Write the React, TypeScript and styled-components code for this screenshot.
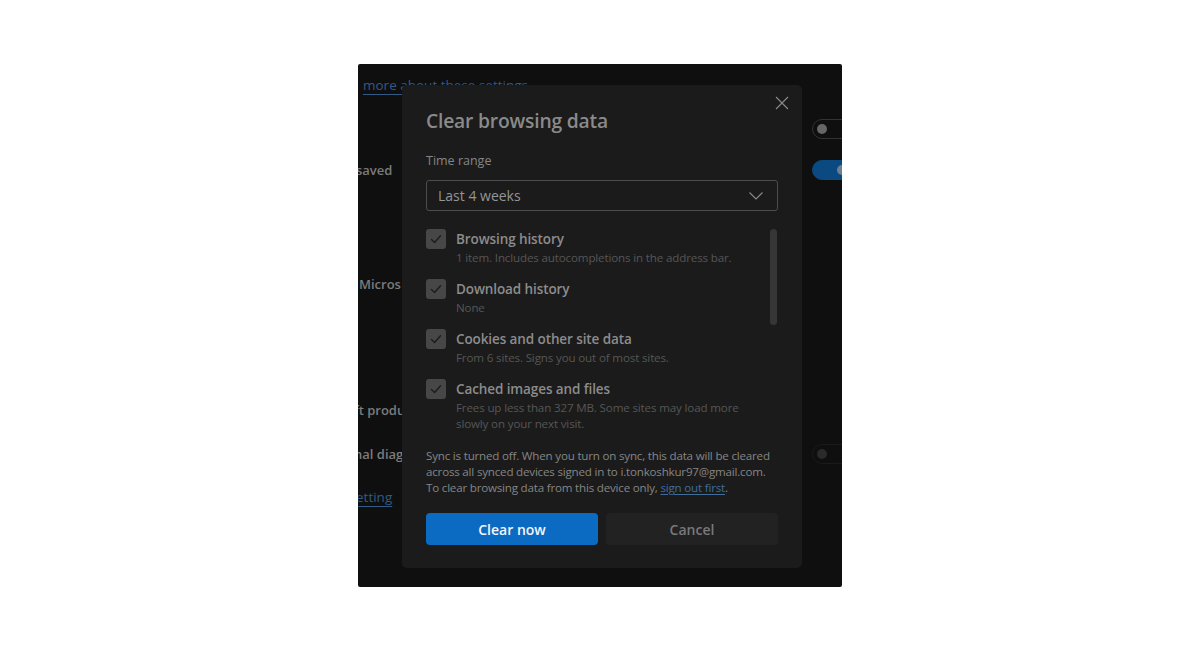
import React from "react";
import styled, { createGlobalStyle } from "styled-components";

const Global = createGlobalStyle`
  html, body { margin: 0; padding: 0; background: #ffffff; }
  body { font-family: "Open Sans", "Noto Sans", sans-serif; }
  * { box-sizing: border-box; }
`;

const Page = styled.div`
  width: 1200px;
  height: 650px;
  display: flex;
  align-items: flex-start;
  justify-content: center;
  padding-top: 64px;
`;

const Shot = styled.div`
  position: relative;
  width: 484px;
  height: 523px;
  background: #0f0f0f;
  overflow: hidden;
  border-radius: 2px;
`;

const BgColumn = styled.div`
  display: flex;
  flex-direction: column;
  width: 484px;
  height: 100%;
  color: #7b7b7b;
  font-size: 13px;
  font-weight: 600;
`;

const BgRow = styled.div<{ $h: number }>`
  height: ${(p) => p.$h}px;
  display: flex;
  align-items: center;
  justify-content: space-between;
  white-space: nowrap;
`;

const BgText = styled.span<{ $shift?: number }>`
  margin-left: ${(p) => p.$shift ?? 0}px;
`;

const BgLink = styled.span<{ $shift?: number }>`
  margin-left: ${(p) => p.$shift ?? 0}px;
  color: #2f5b86;
  font-weight: 400;
  font-size: 13.5px;
  text-decoration: underline;
  text-underline-offset: 4px;
`;

const Toggle = styled.div<{ $on?: boolean; $dim?: boolean }>`
  width: 40px;
  height: 20px;
  margin-right: -10px;
  border-radius: 10px;
  border: 1px solid ${(p) => (p.$on ? "#0b4a80" : p.$dim ? "#1a1a1a" : "#333")};
  background: ${(p) => (p.$on ? "#0b4a80" : "transparent")};
  display: flex;
  align-items: center;
  padding: 0 4px;
  justify-content: ${(p) => (p.$on ? "flex-end" : "flex-start")};
  &::after {
    content: "";
    width: 10px;
    height: 10px;
    border-radius: 50%;
    background: ${(p) => (p.$on ? "#6f7f8f" : p.$dim ? "#2a2a2a" : "#666")};
  }
`;

const Dialog = styled.div`
  position: absolute;
  left: 44px;
  top: 21px;
  width: 400px;
  height: 483px;
  background: #1b1b1b;
  border-radius: 5px;
  padding: 24px 24px 0 24px;
  display: flex;
  flex-direction: column;
`;

const CloseBtn = styled.div`
  position: absolute;
  top: 10px;
  right: 12px;
  width: 16px;
  height: 16px;
  display: flex;
  align-items: center;
  justify-content: center;
`;

const Title = styled.h2`
  margin: 0;
  font-size: 19.3px;
  line-height: 23px;
  font-weight: 600;
  color: #8a8a8a;
  letter-spacing: -0.2px;
`;

const Label = styled.div`
  margin-top: 21px;
  font-size: 12.5px;
  line-height: 16px;
  color: #858585;
`;

const Select = styled.div`
  margin-top: 11px;
  height: 31px;
  border: 1px solid #4d4d4d;
  border-radius: 3px;
  display: flex;
  align-items: center;
  justify-content: space-between;
  padding: 0 14px 0 11px;
  font-size: 14px;
  color: #959595;
`;

const ListWrap = styled.div`
  margin-top: 18px;
  height: 205px;
  display: flex;
  gap: 10px;
  overflow: hidden;
`;

const List = styled.div`
  flex: 1;
  display: flex;
  flex-direction: column;
`;

const Item = styled.div`
  display: flex;
  gap: 10px;
  padding-bottom: 14px;
`;

const Box = styled.div`
  width: 20px;
  height: 20px;
  flex: none;
  border-radius: 3px;
  background: #474747;
  display: flex;
  align-items: center;
  justify-content: center;
`;

const ItemText = styled.div`
  display: flex;
  flex-direction: column;
`;

const ItemTitle = styled.div`
  font-size: 13.5px;
  line-height: 20px;
  font-weight: 600;
  color: #8c8c8c;
  letter-spacing: -0.1px;
`;

const ItemSub = styled.div`
  font-size: 11.6px;
  line-height: 15px;
  color: #565656;
  margin-top: 1px;
  max-width: 300px;
  letter-spacing: -0.15px;
`;

const ScrollTrack = styled.div`
  width: 7px;
  flex: none;
  margin-right: 1px;
`;

const Thumb = styled.div`
  height: 96px;
  border-radius: 4px;
  background: #363636;
`;

const SyncNote = styled.p`
  margin: 14px 0 0 0;
  font-size: 11.6px;
  line-height: 16px;
  color: #858585;
  letter-spacing: -0.2px;
  white-space: nowrap;
`;

const Link = styled.a`
  color: #3e6f9c;
  text-decoration: underline;
  text-underline-offset: 2px;
`;

const Actions = styled.div`
  margin-top: 17px;
  display: flex;
  gap: 8px;
`;

const Button = styled.button<{ $primary?: boolean }>`
  flex: 1;
  height: 32px;
  border: none;
  border-radius: 4px;
  font-family: inherit;
  font-size: 14px;
  font-weight: 600;
  background: ${(p) => (p.$primary ? "#0b6bc2" : "#222222")};
  color: ${(p) => (p.$primary ? "#f2f6fb" : "#797979")};
`;

const Check = () => (
  <svg width="14" height="14" viewBox="0 0 14 14">
    <path d="M2.5 7.5 L5.6 10.5 L11.5 3.8" fill="none" stroke="#1c1c1c" strokeWidth="1.4" strokeLinecap="round" strokeLinejoin="round" />
  </svg>
);

const items = [
  { t: "Browsing history", s: ["1 item. Includes autocompletions in the address bar."] },
  { t: "Download history", s: ["None"] },
  { t: "Cookies and other site data", s: ["From 6 sites. Signs you out of most sites."] },
  { t: "Cached images and files", s: ["Frees up less than 327 MB. Some sites may load more", "slowly on your next visit."] },
];

export default function App() {
  return (
    <>
      <Global />
      <Page>
        <Shot>
          <BgColumn>
            <BgRow $h={42}>
              <BgLink $shift={5}>more about these settings</BgLink>
            </BgRow>
            <BgRow $h={46}>
              <span />
              <Toggle />
            </BgRow>
            <BgRow $h={36}>
              <BgText $shift={-2}>saved</BgText>
              <Toggle $on />
            </BgRow>
            <BgRow $h={76} />
            <BgRow $h={40}>
              <BgText $shift={1}>Micros</BgText>
            </BgRow>
            <BgRow $h={86} />
            <BgRow $h={40}>
              <BgText $shift={-4}>ft produ</BgText>
            </BgRow>
            <BgRow $h={4} />
            <BgRow $h={40}>
              <BgText $shift={-4}>nal diag</BgText>
              <Toggle $dim />
            </BgRow>
            <BgRow $h={46}>
              <BgLink $shift={-2}>etting</BgLink>
            </BgRow>
          </BgColumn>
          <Dialog>
            <CloseBtn>
              <svg width="14" height="14" viewBox="0 0 14 14">
                <path d="M1 1 L13 13 M13 1 L1 13" stroke="#8a8a8a" strokeWidth="1.1" />
              </svg>
            </CloseBtn>
            <Title>Clear browsing data</Title>
            <Label>Time range</Label>
            <Select>
              <span>Last 4 weeks</span>
              <svg width="14" height="8" viewBox="0 0 14 8">
                <path d="M0.5 0.5 L7 7 L13.5 0.5" fill="none" stroke="#8a8a8a" strokeWidth="1.1" />
              </svg>
            </Select>
            <ListWrap>
              <List>
                {items.map((it) => (
                  <Item key={it.t}>
                    <Box>
                      <Check />
                    </Box>
                    <ItemText>
                      <ItemTitle>{it.t}</ItemTitle>
                      {it.s.map((line) => (
                        <ItemSub key={line}>{line}</ItemSub>
                      ))}
                    </ItemText>
                  </Item>
                ))}
              </List>
              <ScrollTrack>
                <Thumb />
              </ScrollTrack>
            </ListWrap>
            <SyncNote>
              Sync is turned off. When you turn on sync, this data will be cleared
              <br />
              across all synced devices signed in to i.tonkoshkur97@gmail.com.
              <br />
              To clear browsing data from this device only, <Link>sign out first</Link>.
            </SyncNote>
            <Actions>
              <Button $primary>Clear now</Button>
              <Button>Cancel</Button>
            </Actions>
          </Dialog>
        </Shot>
      </Page>
    </>
  );
}
